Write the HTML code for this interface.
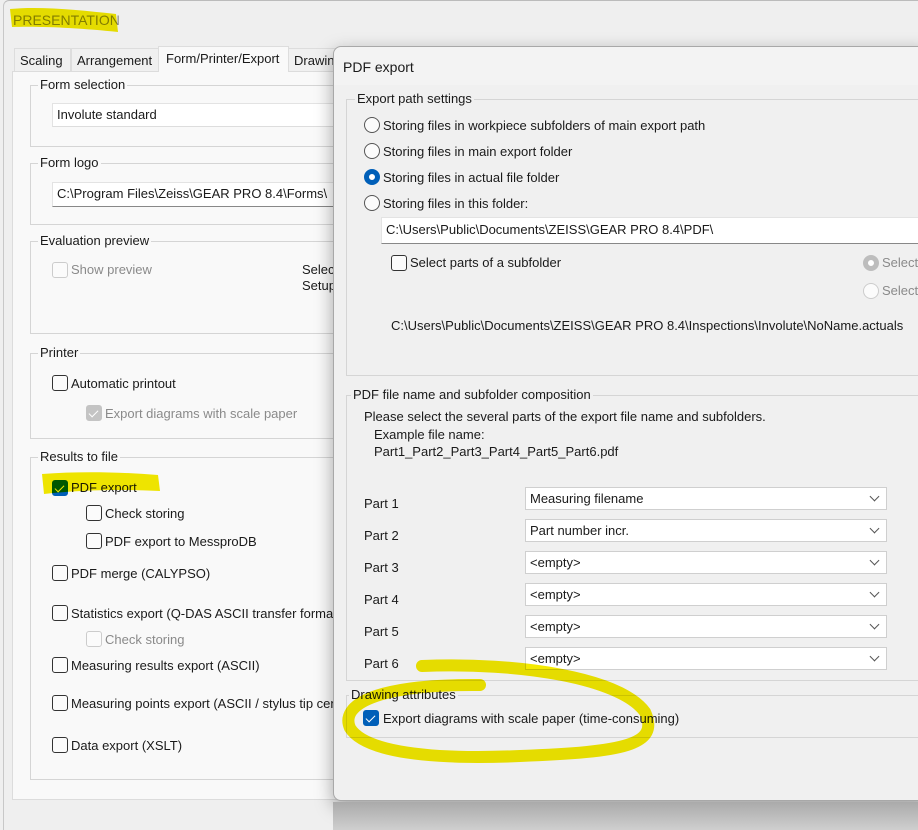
<!DOCTYPE html>
<html><head><meta charset="utf-8"><style>
*{box-sizing:border-box;margin:0;padding:0}
body{width:918px;height:830px;overflow:hidden;background:#efefef;font-family:"Liberation Sans",sans-serif;font-size:13px;color:#1a1a1a;position:relative}
.a{position:absolute;white-space:nowrap}
.win{left:3px;top:0;width:915px;height:830px;border-left:1px solid #c8c8c8;border-top:1px solid #bbb;background:#efefef;border-radius:6px 0 0 0}
.panel{left:12px;top:71px;width:340px;height:729px;background:#f9f9f9;border:1px solid #dcdcdc}
.grp{border:1px solid #d5d5d5}
.gt{position:absolute;top:-9px;left:7px;padding:0 2px;background:inherit}
.cb{position:absolute;width:16px;height:16px;border:1px solid #333;border-radius:3px;background:#fbfbfb}
.cb.dis{border-color:#ccc}
.cb.on{background:#005fb8;border-color:#005fb8}
.cb.on::after{content:"";position:absolute;left:4px;top:2px;width:4px;height:8px;border:solid #fff;border-width:0 1.5px 1.5px 0;transform:rotate(45deg)}
.cb.gon{background:#c4c4c4;border-color:#c4c4c4}
.cb.gon::after{content:"";position:absolute;left:4px;top:2px;width:4px;height:8px;border:solid #fff;border-width:0 1.5px 1.5px 0;transform:rotate(45deg)}
.rb{position:absolute;width:16px;height:16px;border:1px solid #555;border-radius:50%;background:#fbfbfb}
.rb.on{border:5px solid #005fb8;background:#fff}
.rb.gon{border:5px solid #bdbdbd;background:#fff}
.rb.dis{border-color:#ccc}
.tb{position:absolute;background:#fff;border:1px solid #e3e3e3;border-bottom:1px solid #888;padding:3px 4px}
.combo{position:absolute;background:#fff;border:1px solid #cfcfcf;height:23px;padding:3px 4px}
.combo::after{content:"";position:absolute;right:8px;top:5px;width:6px;height:6px;border:solid #555;border-width:0 1px 1px 0;transform:rotate(45deg)}
.g{color:#8a8a8a}
.dlg{left:333px;top:46px;width:600px;height:755px;background:#f0f0f0;border:1px solid #a8a8a8;border-radius:8px;box-shadow:0 6px 18px rgba(0,0,0,.35)}
</style></head><body>
<div class="a win"></div>
<div class="a" style="left:13px;top:12px;font-size:14px;color:#888">PRESENTATION</div>
<div class="a" style="left:14px;top:48px;width:57px;height:24px;border:1px solid #ddd;border-bottom:none;background:#f0f0f0;padding:4px 5px">Scaling</div>
<div class="a" style="left:71px;top:48px;width:88px;height:24px;border:1px solid #ddd;border-bottom:none;background:#f0f0f0;padding:4px 5px">Arrangement</div>
<div class="a" style="left:158px;top:46px;width:131px;height:26px;border:1px solid #ddd;border-bottom:none;background:#f9f9f9;padding:4px 7px;z-index:2">Form/Printer/Export</div>
<div class="a" style="left:288px;top:48px;width:60px;height:24px;border:1px solid #ddd;border-bottom:none;background:#f0f0f0;padding:4px 5px">Drawing</div>
<div class="a panel"></div>
<div class="a grp" style="left:30px;top:85px;width:330px;height:62px;background:#f9f9f9"><span class="gt">Form selection</span></div>
<div class="a tb" style="left:52px;top:103px;width:290px;height:24px;border-bottom-color:#ddd">Involute standard</div>
<div class="a grp" style="left:30px;top:163px;width:330px;height:62px;background:#f9f9f9"><span class="gt">Form logo</span></div>
<div class="a tb" style="left:52px;top:182px;width:290px;height:25px">C:\Program Files\Zeiss\GEAR PRO 8.4\Forms\</div>
<div class="a grp" style="left:30px;top:241px;width:330px;height:93px;background:#f9f9f9"><span class="gt">Evaluation preview</span></div>
<div class="cb dis" style="left:52px;top:262px"></div><div class="a g" style="left:71px;top:262px">Show preview</div>
<div class="a" style="left:302px;top:262px">Selec</div><div class="a" style="left:302px;top:278px">Setup</div>
<div class="a grp" style="left:30px;top:353px;width:330px;height:86px;background:#f9f9f9"><span class="gt">Printer</span></div>
<div class="cb" style="left:52px;top:375px"></div><div class="a" style="left:71px;top:376px">Automatic printout</div>
<div class="cb gon" style="left:86px;top:405px"></div><div class="a g" style="left:105px;top:406px">Export diagrams with scale paper</div>
<div class="a grp" style="left:30px;top:457px;width:330px;height:323px;background:#f9f9f9"><span class="gt">Results to file</span></div>
<div class="cb on" style="left:52px;top:480px"></div><div class="a" style="left:71px;top:480px">PDF export</div>
<div class="cb" style="left:86px;top:505px"></div><div class="a" style="left:105px;top:506px">Check storing</div>
<div class="cb" style="left:86px;top:533px"></div><div class="a" style="left:105px;top:534px">PDF export to MessproDB</div>
<div class="cb" style="left:52px;top:565px"></div><div class="a" style="left:71px;top:566px">PDF merge (CALYPSO)</div>
<div class="cb" style="left:52px;top:605px"></div><div class="a" style="left:71px;top:606px">Statistics export (Q-DAS ASCII transfer format)</div>
<div class="cb dis" style="left:86px;top:631px"></div><div class="a g" style="left:105px;top:632px">Check storing</div>
<div class="cb" style="left:52px;top:657px"></div><div class="a" style="left:71px;top:658px">Measuring results export (ASCII)</div>
<div class="cb" style="left:52px;top:695px"></div><div class="a" style="left:71px;top:696px">Measuring points export (ASCII / stylus tip center)</div>
<div class="cb" style="left:52px;top:737px"></div><div class="a" style="left:71px;top:738px">Data export (XSLT)</div>

<div class="a dlg">
 <div class="a" style="left:0;top:0;width:600px;height:38px;background:#f3f3f3;border-radius:8px 0 0 0"></div>
 <div class="a" style="left:9px;top:12px;font-size:14px">PDF export</div>
 <div class="a grp" style="left:12px;top:52px;width:600px;height:277px;background:#f0f0f0"><span class="gt" style="left:8px">Export path settings</span></div>
 <div class="rb" style="left:30px;top:70px"></div><div class="a" style="left:49px;top:71px">Storing files in workpiece subfolders of main export path</div>
 <div class="rb" style="left:30px;top:96px"></div><div class="a" style="left:49px;top:97px">Storing files in main export folder</div>
 <div class="rb on" style="left:30px;top:122px"></div><div class="a" style="left:49px;top:123px">Storing files in actual file folder</div>
 <div class="rb" style="left:30px;top:148px"></div><div class="a" style="left:49px;top:149px">Storing files in this folder:</div>
 <div class="tb" style="left:47px;top:170px;width:560px;height:27px;padding-top:4px">C:\Users\Public\Documents\ZEISS\GEAR PRO 8.4\PDF\</div>
 <div class="cb" style="left:57px;top:208px"></div><div class="a" style="left:76px;top:208px">Select parts of a subfolder</div>
 <div class="rb gon" style="left:529px;top:208px"></div><div class="a g" style="left:548px;top:208px">Select</div>
 <div class="rb dis" style="left:529px;top:236px"></div><div class="a g" style="left:548px;top:236px">Select</div>
 <div class="a" style="left:57px;top:271px">C:\Users\Public\Documents\ZEISS\GEAR PRO 8.4\Inspections\Involute\NoName.actuals</div>
 <div class="a grp" style="left:12px;top:348px;width:600px;height:286px;background:#f0f0f0"><span class="gt" style="left:4px">PDF file name and subfolder composition</span></div>
 <div class="a" style="left:30px;top:362px">Please select the several parts of the export file name and subfolders.</div>
 <div class="a" style="left:40px;top:380px">Example file name:</div>
 <div class="a" style="left:40px;top:397px">Part1_Part2_Part3_Part4_Part5_Part6.pdf</div>
 <div class="a" style="left:30px;top:449px">Part 1</div><div class="combo" style="left:191px;top:440px;width:362px">Measuring filename</div>
 <div class="a" style="left:30px;top:481px">Part 2</div><div class="combo" style="left:191px;top:472px;width:362px">Part number incr.</div>
 <div class="a" style="left:30px;top:513px">Part 3</div><div class="combo" style="left:191px;top:504px;width:362px">&lt;empty&gt;</div>
 <div class="a" style="left:30px;top:545px">Part 4</div><div class="combo" style="left:191px;top:536px;width:362px">&lt;empty&gt;</div>
 <div class="a" style="left:30px;top:577px">Part 5</div><div class="combo" style="left:191px;top:568px;width:362px">&lt;empty&gt;</div>
 <div class="a" style="left:30px;top:609px">Part 6</div><div class="combo" style="left:191px;top:600px;width:362px">&lt;empty&gt;</div>
 <div class="a grp" style="left:12px;top:648px;width:600px;height:43px;background:#f0f0f0"><span class="gt" style="left:2px">Drawing attributes</span></div>
 <div class="cb on" style="left:29px;top:663px"></div><div class="a" style="left:49px;top:664px">Export diagrams with scale paper (time-consuming)</div>
</div>
<div class="a" style="left:333px;top:802px;width:585px;height:28px;background:linear-gradient(#aaa,#cfcfcf)"></div>

<svg class="a" style="left:0;top:0;mix-blend-mode:multiply" width="918" height="830">
 <path d="M10 9 C40 6 80 10 116 14 L118 32 C80 28 40 26 12 27 Z" fill="#f4ea00"/>
 <path d="M42 474 C80 471 120 472 158 475 L160 491 C120 489 80 490 44 494 Z" fill="#f4ea00"/>
 <path d="M422 666 C520 662 620 678 645 712 C660 745 625 752 520 756 C430 760 365 752 350 728 C340 705 375 684 480 685" fill="none" stroke="#f4ea00" stroke-width="12" stroke-linecap="round"/>
</svg>
</body></html>
